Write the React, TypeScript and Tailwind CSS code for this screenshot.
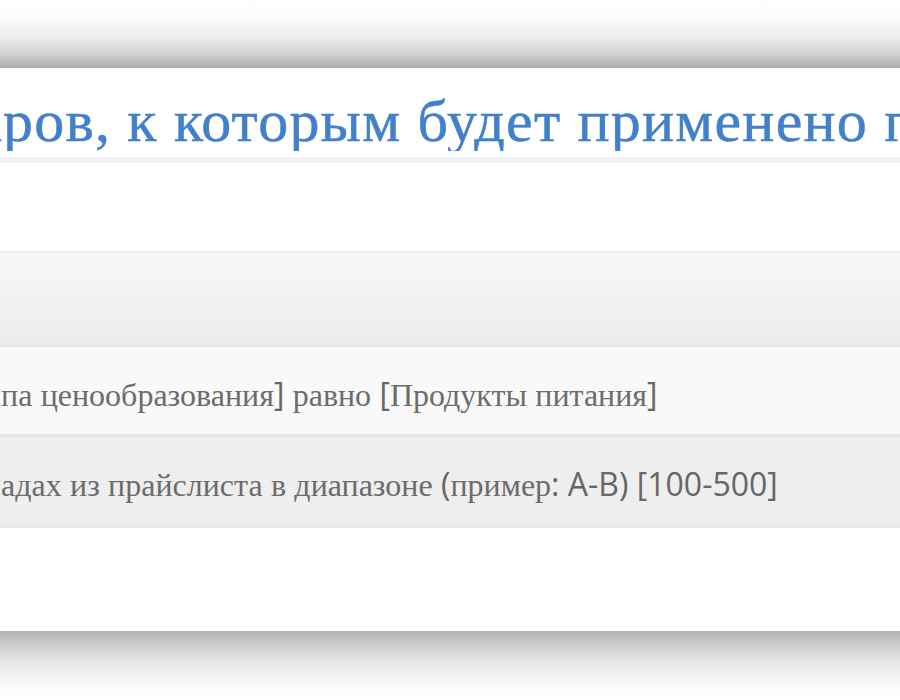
import React from "react";

const CYR = /([А-Яа-яЁё]+)/;

// Cyrillic runs fall back to a serif face, everything else stays in the sans face
function Mixed({ text }: { text: string }) {
  const parts = text.split(CYR).filter((p) => p.length > 0);
  return (
    <>
      {parts.map((p, i) =>
        CYR.test(p) ? (
          <span key={i} className="font-['Liberation_Serif',serif] text-[#6c6c6c]">
            {p}
          </span>
        ) : (
          <span key={i} className="whitespace-pre font-['Open_Sans',sans-serif] text-[#666666]">
            {p}
          </span>
        )
      )}
    </>
  );
}

// a hidden head of the line that hangs off the left edge
function Overhang({ children }: { children: React.ReactNode }) {
  return <span className="inline-flex w-0 justify-end whitespace-pre">{children}</span>;
}

function Row({ head, text, bg, h }: { head: string; text: string; bg: string; h: string }) {
  return (
    <div className={`${h} overflow-hidden whitespace-nowrap pl-[1px] pt-[31px] text-[32px] leading-none ${bg}`}>
      <Overhang>
        <Mixed text={head} />
      </Overhang>
      <Mixed text={text} />
    </div>
  );
}

export default function App() {
  return (
    <div className="flex h-[700px] w-[900px] flex-col overflow-hidden bg-white">
      <div className="h-[68px] shrink-0 bg-[linear-gradient(to_bottom,#ffffff_0%,#fbfbfb_28%,#ececec_55%,#d0d0d0_80%,#acacac_100%)]" />

      <div className="flex h-[563px] shrink-0 flex-col bg-white">
        <div className="overflow-hidden whitespace-nowrap pl-[3px] pt-[23px] font-['Liberation_Serif',serif] text-[60px] leading-none tracking-[1.2px] text-[#4380cc] [-webkit-text-stroke:0.5px_#4380cc]">
          <Overhang>това</Overhang>
          ров, к которым будет применено правило
        </div>
        <div className="mt-[6px] h-[6px] bg-[#f0f3f8]" />

        <div className="mt-[88px] flex flex-col">
          <div className="h-[2px] bg-[#ebebeb]" />
          <div className="h-[92px] bg-[linear-gradient(to_bottom,#f7f7f7,#ececec)]" />
          <div className="h-[2px] bg-[#e3e3e3]" />
          <Row h="h-[87px]" head="[Груп" text="па ценообразования] равно [Продукты питания]" bg="bg-[#f9f9f9]" />
          <div className="h-[3px] bg-[#e4e4e4]" />
          <Row h="h-[88px]" head="[Цена в розничных покупках по скл" text="адах из прайслиста в диапазоне (пример: A-B) [100-500]" bg="bg-[#eeeeee]" />
          <div className="h-[3px] bg-[#e9e9e9]" />
        </div>
      </div>

      <div className="h-[69px] shrink-0 bg-[linear-gradient(to_bottom,#b4b4b4_0%,#cdcdcd_20%,#e6e6e6_45%,#f8f8f8_75%,#ffffff_100%)]" />
    </div>
  );
}
